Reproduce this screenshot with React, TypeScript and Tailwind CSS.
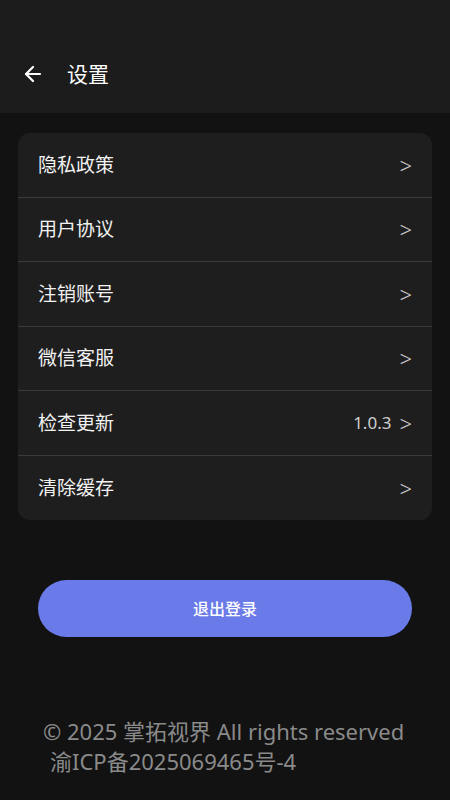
import { ArrowLeft } from "lucide-react";

const items = [
  { label: "隐私政策" },
  { label: "用户协议" },
  { label: "注销账号" },
  { label: "微信客服" },
  { label: "检查更新", value: "1.0.3" },
  { label: "清除缓存" },
];

const font = { fontFamily: '"Noto Sans", "Noto Sans CJK SC", sans-serif' };

export default function App() {
  return (
    <div className="flex h-[800px] w-[450px] flex-col bg-[#121212] text-white" style={font}>
      <header className="flex h-[113px] items-end bg-[#1c1c1c] pb-[26px]">
        <button className="ml-[20px] flex h-[26px] w-[26px] items-center justify-center text-white">
          <ArrowLeft size={24} strokeWidth={2.2} />
        </button>
        <h1 className="ml-[21px] text-[21px] leading-[26px] text-white">设置</h1>
      </header>

      <main className="flex flex-1 flex-col px-[18px] pt-[20px]">
        <div className="overflow-hidden rounded-[12px] bg-[#1e1e1e]">
          {items.map((item, i) => (
            <div
              key={item.label}
              className={
                "flex h-[64.5px] items-center justify-between pl-[20px] pr-[20px] " +
                (i < items.length - 1 ? "border-b border-[#3a3a3a]" : "")
              }
            >
              <span className="text-[19px] text-[#f2f2f2]">{item.label}</span>
              <span className="flex items-center gap-[8px] text-[17px] text-[#cfcfcf]">
                {item.value && <span>{item.value}</span>}
                <span className="text-[22px] font-light leading-none">&gt;</span>
              </span>
            </div>
          ))}
        </div>

        <button className="mx-[20px] mt-[60px] h-[57px] rounded-full bg-[#6a7ae8] text-[16px] font-medium text-white">
          退出登录
        </button>

        <footer className="mt-[79px] pl-[25px] text-[22px] leading-[30px] text-[#8a8a8a]">
          <p>© 2025 掌拓视界 All rights reserved</p>
          <p className="pl-[7px]">渝ICP备2025069465号-4</p>
        </footer>
      </main>
    </div>
  );
}
